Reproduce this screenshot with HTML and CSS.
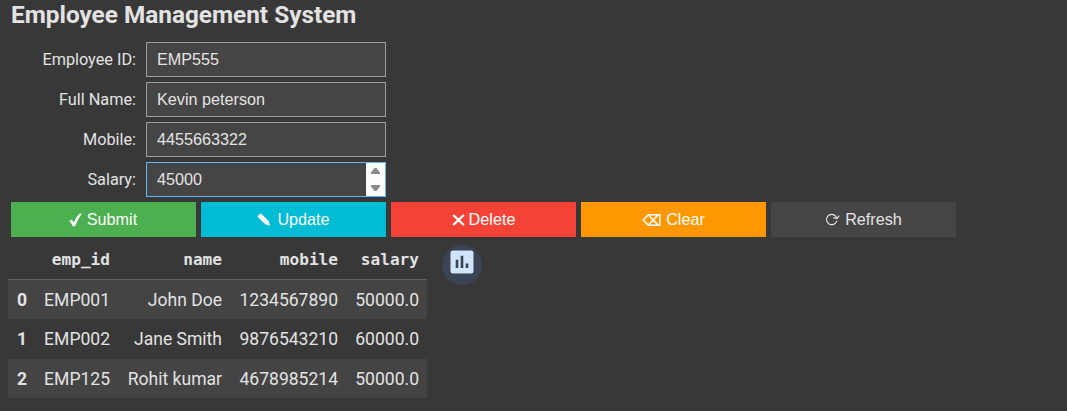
FILE: index.html
```html
<!DOCTYPE html>
<html lang="en">
<head>
<meta charset="utf-8">
<title>Employee Management System</title>
<link rel="stylesheet" href="styles.css">
</head>
<body>
<main class="output">
  <h2 class="title"><span>Employee Management System</span></h2>
  <form class="form">
    <div class="field"><label for="id">Employee ID:</label><div class="control"><input id="id" type="text" value="EMP555"></div></div>
    <div class="field"><label for="name">Full Name:</label><div class="control"><input id="name" type="text" value="Kevin peterson"></div></div>
    <div class="field"><label for="mobile">Mobile:</label><div class="control"><input id="mobile" type="text" value="4455663322"></div></div>
    <div class="field"><label for="salary">Salary:</label><div class="control focused"><input id="salary" type="text" value="45000">
      <span class="spinner"><svg width="19" height="33" viewBox="0 0 19 33"><path d="M5 11v-1.5L8.5 5h2L14 9.500V11zM5 22h9v1.500L10.500 28h-2L5 23.500z" fill="#8b8b8b"/></svg></span></div></div>
  </form>
  <div class="buttons">
    <button class="btn submit"><svg width="13" height="14" viewBox="0 0 13 14"><path d="M.2 8 2.700 6.500 4.900 9.500Q7 4 10.300.8L12.800.5Q8.800 6 6 13.200H3.800Q2.500 10 .2 8z" fill="currentColor"/></svg><span>Submit</span></button>
    <button class="btn update"><svg width="15" height="14" viewBox="0 0 15 14"><path d="M.8 2.800 3 .8Q4 .4 4.800 1.200L11.700 8 13 12.700 8.300 11.200 1.200 4.500Q.5 3.500.8 2.800z" fill="currentColor"/></svg><span>Update</span></button>
    <button class="btn delete"><svg width="13" height="14" viewBox="0 0 13 14"><path d="M1.200 2 11.800 12M11.800 2 1.200 12" stroke="currentColor" stroke-width="2.400"/></svg><span>Delete</span></button>
    <button class="btn clear"><svg width="19" height="14" viewBox="0 0 19 14"><path d="M1.200 7 6.300 1.800H17.800V12.200H6.300zM6.500 2.300l9.300 9.400M15.800 2.300l-9.300 9.400" fill="none" stroke="currentColor" stroke-width="1.500"/></svg><span>Clear</span></button>
    <button class="btn refresh"><svg width="15" height="14" viewBox="0 0 15 14"><path d="M11.800 7.500A5.200 5.200 0 1 1 10.800 3.300L12 5.200M8.200 4.800 12.300 5.400 14.200 2.700" fill="none" stroke="currentColor" stroke-width="1.200"/></svg><span>Refresh</span></button>
  </div>
  <div class="results">
    <table class="data">
      <colgroup><col class="c0"><col class="c1"><col class="c2"><col class="c3"><col class="c4"></colgroup>
      <thead><tr><th></th><th>emp_id</th><th>name</th><th>mobile</th><th>salary</th></tr></thead>
      <tbody>
        <tr><th>0</th><td>EMP001</td><td>John Doe</td><td>1234567890</td><td>50000.0</td></tr>
        <tr><th>1</th><td>EMP002</td><td>Jane Smith</td><td>9876543210</td><td>60000.0</td></tr>
        <tr><th>2</th><td>EMP125</td><td>Rohit kumar</td><td>4678985214</td><td>50000.0</td></tr>
      </tbody>
    </table>
    <button class="chart" aria-label="Suggest charts"><svg width="24" height="24" viewBox="0 0 24 24"><rect x=".5" y=".5" width="23" height="23" rx="2.500" fill="#d2e3fc"/><path d="M5.700 9.700h2.600V18H5.700zM10.700 5.700h2.600V18h-2.600zM15.700 13.500h2.600V18h-2.600z" fill="#3b4455"/></svg></button>
  </div>
</main>
</body>
</html>
```
FILE: styles.css
```css
* { box-sizing: border-box; }
body {
  margin: 0;
  height: 411px;
  overflow: hidden;
  background: #383838;
  color: #e2e2e2;
  font-family: Roboto, sans-serif;
}
.output { height: 410px; border-bottom: 1px solid #303030; }
.title {
  height: 42px;
  margin: 0;
  padding-left: 11px;
  font-size: 24.35px;
  font-weight: 700;
  line-height: 30px;
}
.form { display: flex; flex-direction: column; gap: 5px; margin-left: 11px; }
.field { display: flex; gap: 10px; width: 375px; height: 35px; }
.field label { width: 125px; text-align: right; font-size: 16.25px; line-height: 35px; }
.control { display: flex; width: 240px; border: 1px solid #9e9e9e; background: #454545; }
.control.focused { border-color: #64b5f6; }
.control input {
  flex: 1;
  min-width: 0;
  padding: 0 10px;
  border: 0;
  outline: 0;
  background: transparent;
  color: #e2e2e2;
  font: 16.2px "Liberation Sans", Arial, sans-serif;
}
.spinner { width: 19px; background: #fcfcfc; }
.spinner svg, .btn svg, .chart svg { display: block; }
.buttons { display: flex; gap: 5px; margin: 5px 0 0 11px; }
.btn {
  display: flex;
  align-items: center;
  justify-content: center;
  gap: 5px;
  width: 185px;
  height: 35px;
  padding: 0;
  border: 0;
  color: #fff;
  font: 16.2px "Liberation Sans", Arial, sans-serif;
}
.submit { background: #4caf50; }
.update { background: #00bcd4; }
.delete { background: #f44336; gap: 4px; }
.clear { background: #ff9800; }
.refresh { background: #454545; color: #e2e2e2; }
.submit { padding-right: 1px; }
.results { display: flex; align-items: flex-start; gap: 15px; margin: 3px 0 0 8px; }
.data { width: 419px; table-layout: fixed; border-collapse: separate; border-spacing: 0; font-size: 17.55px; }
.c0 { width: 28px; }
.c1 { width: 82px; }
.c2 { width: 112px; }
.c3 { width: 116px; }
.c4 { width: 81px; }
.data th, .data td { height: 39px; padding: 0 8px 0 0; text-align: right; white-space: nowrap; line-height: 38px; }
.data tbody th { padding-right: 9px; }
.data thead th { height: 40px; border-bottom: 1px solid #616161; font: 700 16.1px/39px "DejaVu Sans Mono", monospace; }
.data tbody tr:nth-child(2) td, .data tbody tr:nth-child(2) th { height: 40px; }
.data tbody tr:nth-child(odd) { background: #444; }
.chart {
  display: flex;
  justify-content: center;
  width: 40px;
  height: 40px;
  margin-top: 5px;
  padding: 5px 0 0;
  border: 0;
  border-radius: 50%;
  background: #3b4455;
}
```
